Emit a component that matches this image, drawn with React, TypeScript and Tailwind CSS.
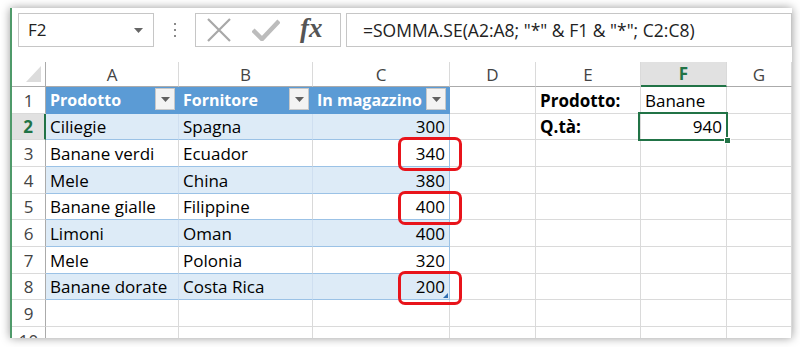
import React from 'react';

const colWidths = [34, 133, 134, 137, 86, 105, 86, 65];
const gridCols = 'grid grid-cols-[34px_133px_134px_137px_86px_105px_86px_65px]';

type RowData = { n: number; h: string; a?: string; b?: string; c?: string; e?: string; f?: string };

const rows: RowData[] = [
  { n: 1, h: 'h-[27px]', a: 'Prodotto', b: 'Fornitore', c: 'In magazzino', e: 'Prodotto:', f: 'Banane' },
  { n: 2, h: 'h-[26px]', a: 'Ciliegie', b: 'Spagna', c: '300', e: 'Q.tà:', f: '940' },
  { n: 3, h: 'h-[27px]', a: 'Banane verdi', b: 'Ecuador', c: '340' },
  { n: 4, h: 'h-[27px]', a: 'Mele', b: 'China', c: '380' },
  { n: 5, h: 'h-[26px]', a: 'Banane gialle', b: 'Filippine', c: '400' },
  { n: 6, h: 'h-[27px]', a: 'Limoni', b: 'Oman', c: '400' },
  { n: 7, h: 'h-[27px]', a: 'Mele', b: 'Polonia', c: '320' },
  { n: 8, h: 'h-[26px]', a: 'Banane dorate', b: 'Costa Rica', c: '200' },
  { n: 9, h: 'h-[27px]' },
  { n: 10, h: 'h-[27px]' },
];

const circled = [3, 5, 8];

const FilterButton = () => (
  <div className="absolute right-[3px] top-[1px] w-[20px] h-[22px] bg-[#f3f3f3] border border-[#c8c8c8] flex items-center justify-center">
    <svg width="9" height="5" viewBox="0 0 9 5">
      <path d="M0 0h9L4.5 5z" fill="#606060" />
    </svg>
  </div>
);

const PlainCell = ({ children, className = '' }: { children?: React.ReactNode; className?: string }) => (
  <div className={'relative flex items-center h-full px-[4px] bg-white border-b border-r border-[#dadada] ' + className}>
    {children}
  </div>
);

const TableCell = ({ row, col, text }: { row: number; col: 'a' | 'b' | 'c'; text?: string }) => {
  if (row > 8) return <PlainCell />;
  const isHeader = row === 1;
  const banded = row % 2 === 0;
  const right = col === 'c';
  let cls = 'relative flex items-center h-full px-[4px] ';
  if (isHeader) {
    cls += 'bg-[#5b9bd5] text-white font-bold border-b border-r border-[#5b9bd5] text-[16px]';
  } else if (banded) {
    cls += 'bg-[#ddebf7] border-b border-b-[#9bc2e6] border-r ' + (right ? 'border-r-[#9bc2e6]' : 'border-r-[#cfdff0]');
  } else {
    cls += 'bg-white border-b border-b-[#9bc2e6] border-r ' + (right ? 'border-r-[#9bc2e6]' : 'border-r-[#d9d9d9]');
  }
  if (right && !isHeader) cls += ' justify-end';
  return (
    <div className={cls}>
      <span className="leading-none">{text}</span>
      {isHeader && <FilterButton />}
      {right && circled.includes(row) && (
        <div className="absolute z-10 left-[85px] top-[-3px] w-[64px] h-[34px] border-[3px] border-[#e8141b] rounded-[7px]" />
      )}
      {right && row === 8 && (
        <svg className="absolute right-[1px] bottom-[1px]" width="5" height="5" viewBox="0 0 5 5">
          <path d="M5 0v5H0z" fill="#2f6fb3" />
        </svg>
      )}
    </div>
  );
};

const Row = ({ r }: { r: RowData }) => {
  const active = r.n === 2;
  return (
    <div className={`${gridCols} ${r.h}`}>
      <div
        className={
          'flex items-center justify-center h-full border-b border-b-[#dadada] ' +
          (active
            ? 'bg-[#e1e1e1] text-[#217346] font-bold border-r-2 border-r-[#217346]'
            : 'bg-white text-[#444] border-r border-r-[#ababab]')
        }
      >
        <span className="leading-none">{r.n}</span>
      </div>
      <TableCell row={r.n} col="a" text={r.a} />
      <TableCell row={r.n} col="b" text={r.b} />
      <TableCell row={r.n} col="c" text={r.c} />
      <PlainCell />
      <PlainCell className="font-bold">
        <span className="leading-none">{r.e}</span>
      </PlainCell>
      <PlainCell className={active ? 'justify-end' : ''}>
        <span className="leading-none">{r.f}</span>
        {active && (
          <div className="absolute z-10 left-[-3px] top-[-2px] right-[-2px] bottom-[-2px] border-2 border-[#217346]">
            <div className="absolute right-[-5px] bottom-[-5px] w-[7px] h-[7px] bg-[#217346] border border-white" />
          </div>
        )}
      </PlainCell>
      <PlainCell />
    </div>
  );
};

const headers = ['', 'A', 'B', 'C', 'D', 'E', 'F', 'G'];

export default function App() {
  return (
    <div className="w-[800px] h-[347px] bg-white overflow-hidden pt-[8px] pl-[10px] font-['Open_Sans',sans-serif] text-[17px] text-black">
      <div className="w-[782px] h-[330px] overflow-hidden bg-white border-l-2 border-[#4f9a6a] shadow-[0_0_9px_rgba(0,0,0,0.4)]">
        {/* Formula bar */}
        <div className="h-[54px] flex items-start pt-[5px]">
          <div className="ml-[6px] w-[136px] h-[34px] border border-[#c6c6c6] flex items-center justify-between pl-[9px] pr-[10px]">
            <span className="text-[17px] text-[#222]">F2</span>
            <svg width="9" height="5" viewBox="0 0 9 5">
              <path d="M0 0h9L4.5 5z" fill="#666" />
            </svg>
          </div>
          <div className="w-[41px] h-[34px] flex flex-col items-center justify-center gap-[4px]">
            <span className="w-[2px] h-[2px] bg-[#8a8a8a]" />
            <span className="w-[2px] h-[2px] bg-[#8a8a8a]" />
            <span className="w-[2px] h-[2px] bg-[#8a8a8a]" />
          </div>
          <div className="w-[146px] h-[34px] border border-[#c6c6c6] flex items-center pl-[10px] gap-[20px]">
            <svg width="26" height="24" viewBox="0 0 26 24">
              <path d="M2 1L24 23M24 1L2 23" stroke="#a8a8a8" strokeWidth="2.2" fill="none" />
            </svg>
            <svg width="28" height="22" viewBox="0 0 28 22">
              <path d="M1 11L10 20L27 2" stroke="#bcbcbc" strokeWidth="4.5" fill="none" />
            </svg>
            <span className="font-['Liberation_Serif',serif] italic font-bold text-[27px] leading-none text-[#555] -mt-[4px]">fx</span>
          </div>
          <div className="ml-[5px] w-[446px] h-[34px] border border-[#c6c6c6] flex items-center pl-[16px]">
            <span className="text-[17.5px] text-[#222]">=SOMMA.SE(A2:A8; "*" &amp; F1 &amp; "*"; C2:C8)</span>
          </div>
        </div>

        {/* Column headers */}
        <div className={`${gridCols} h-[25px]`}>
          {headers.map((h, i) => (
            <div
              key={i}
              className={
                'relative flex items-center justify-center h-full ' +
                (i === 0
                  ? 'border-r border-r-[#ababab] border-b border-b-[#ababab]'
                  : h === 'F'
                  ? 'bg-[#e1e1e1] text-[#217346] font-bold border-r border-r-[#dadada] border-b-2 border-b-[#217346]'
                  : 'text-[#444] border-r border-r-[#dadada] border-b border-b-[#ababab]')
              }
              style={{ width: colWidths[i] }}
            >
              {i === 0 ? (
                <svg className="absolute right-[4px] bottom-[4px]" width="15" height="16" viewBox="0 0 15 16">
                  <path d="M15 0V16H0z" fill="#dcdcdc" />
                </svg>
              ) : (
                <span className="leading-none">{h}</span>
              )}
            </div>
          ))}
        </div>

        {rows.map((r) => (
          <Row key={r.n} r={r} />
        ))}
      </div>
    </div>
  );
}
